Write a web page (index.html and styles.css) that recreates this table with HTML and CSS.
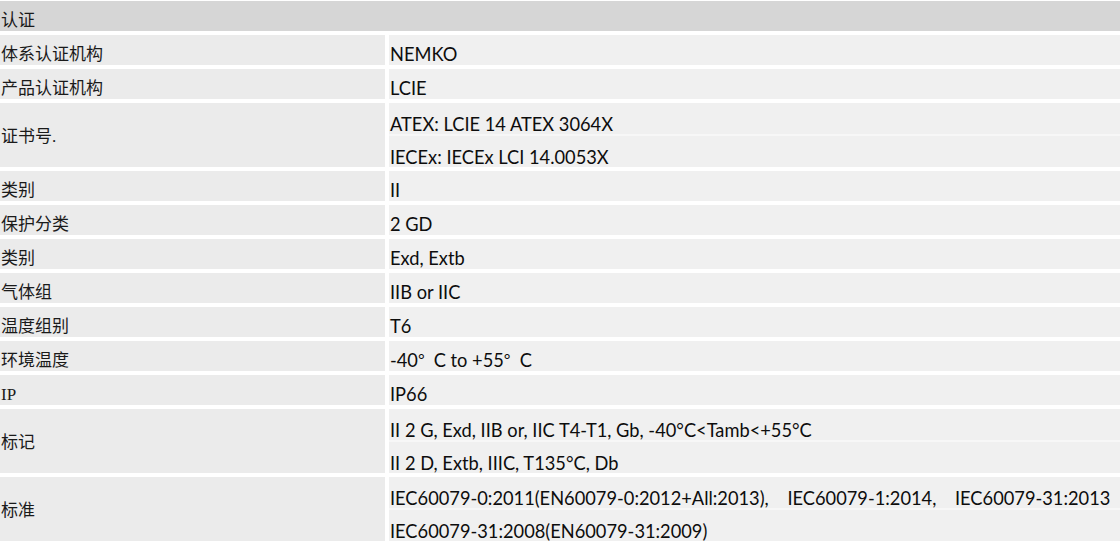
FILE: index.html
```html
<!DOCTYPE html>
<html lang="zh-CN">
<head>
<meta charset="utf-8">
<title>认证</title>
<link rel="stylesheet" href="styles.css">
</head>
<body>
<div class="spec">
  <div class="head">认证</div>

  <div class="row">
    <div class="label">体系认证机构</div>
    <div class="vals"><div class="val">NEMKO</div></div>
  </div>
  <div class="row">
    <div class="label">产品认证机构</div>
    <div class="vals"><div class="val">LCIE</div></div>
  </div>
  <div class="row tall">
    <div class="label">证书号.</div>
    <div class="vals multi">
      <div class="val">ATEX: LCIE 14 ATEX 3064X</div>
      <div class="val">IECEx: IECEx LCI 14.0053X</div>
    </div>
  </div>
  <div class="row">
    <div class="label">类别</div>
    <div class="vals"><div class="val">II</div></div>
  </div>
  <div class="row">
    <div class="label">保护分类</div>
    <div class="vals"><div class="val">2 GD</div></div>
  </div>
  <div class="row">
    <div class="label">类别</div>
    <div class="vals"><div class="val">Exd, Extb</div></div>
  </div>
  <div class="row">
    <div class="label">气体组</div>
    <div class="vals"><div class="val">IIB or IIC</div></div>
  </div>
  <div class="row">
    <div class="label">温度组别</div>
    <div class="vals"><div class="val">T6</div></div>
  </div>
  <div class="row">
    <div class="label">环境温度</div>
    <div class="vals"><div class="val">-40<span class="deg">°</span>C to +55<span class="deg">°</span>C</div></div>
  </div>
  <div class="row">
    <div class="label">IP</div>
    <div class="vals"><div class="val">IP66</div></div>
  </div>
  <div class="row tall">
    <div class="label">标记</div>
    <div class="vals multi">
      <div class="val">II 2 G, Exd, IIB or, IIC T4-T1, Gb, -40°C&lt;Tamb&lt;+55°C</div>
      <div class="val">II 2 D, Extb, IIIC, T135°C, Db</div>
    </div>
  </div>
  <div class="row tall">
    <div class="label">标准</div>
    <div class="vals multi">
      <div class="val pre">IEC60079-0:2011(EN60079-0:2012+All:2013),    IEC60079-1:2014,    IEC60079-31:2013</div>
      <div class="val">IEC60079-31:2008(EN60079-31:2009)</div>
    </div>
  </div>
</div>
</body>
</html>
```

FILE: styles.css
```css
html, body {
  margin: 0;
  padding: 0;
  background: #ffffff;
}

.spec {
  display: flex;
  flex-direction: column;
  gap: 4px;
  padding-top: 1px;
  width: 1120px;
}

.head {
  height: 30px;
  background: #d6d6d6;
  display: flex;
  align-items: center;
  padding: 10px 0 0 1px;
  box-sizing: border-box;
  font-family: "Liberation Serif", "Noto Sans CJK SC", serif;
  font-size: 17px;
  line-height: 20px;
  color: #1a1a1a;
}

.row {
  display: grid;
  grid-template-columns: 385px 1fr;
  column-gap: 4px;
}

.label {
  background: #ebebeb;
  display: flex;
  align-items: center;
  padding: 10px 0 0 1px;
  font-family: "Liberation Serif", "Noto Sans CJK SC", serif;
  font-size: 17px;
  line-height: 20px;
  color: #1a1a1a;
}

.row.tall .label {
  padding-top: 3px;
}

.vals {
  display: flex;
  flex-direction: column;
  gap: 4px;
  background: #f7f7f7;
}

.vals.multi {
  gap: 2px;
}

.vals.multi .val {
  height: 31px;
  padding-top: 10px;
}

.val {
  height: 30px;
  box-sizing: border-box;
  background: #f0f0f0;
  display: flex;
  align-items: center;
  padding: 8px 0 0 1px;
  font-family: "Lato", "Open Sans", sans-serif;
  font-size: 18.25px;
  line-height: 20px;
  color: #0d0d0d;
  white-space: nowrap;
}

.pre {
  white-space: pre;
}

.deg {
  font-family: "Noto Sans CJK SC", sans-serif;
  margin-right: 9px;
}
```
